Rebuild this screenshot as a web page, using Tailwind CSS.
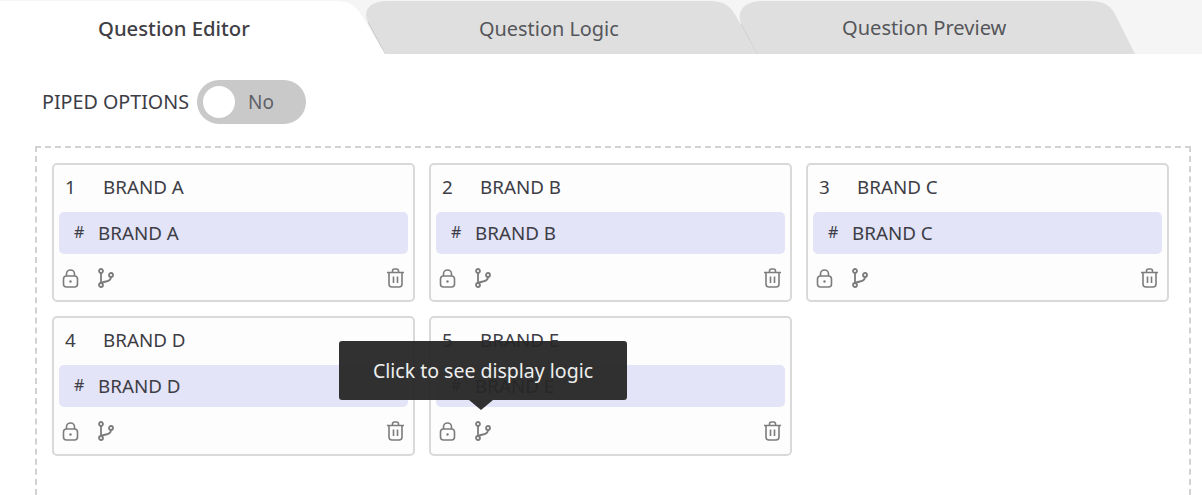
<!DOCTYPE html>
<html lang="en">
<head>
  <meta charset="UTF-8" />
  <title>Question Editor</title>
  <script src="https://cdn.jsdelivr.net/npm/@tailwindcss/browser@4"></script>
</head>
<body class="bg-white h-[495px] overflow-hidden font-['Noto_Sans',sans-serif] text-[#3d3d46]">

  <!-- tabs -->
  <div class="flex h-[54px] bg-[#f5f5f5] overflow-hidden">
    <div class="relative z-20 w-[385px] h-[54px] flex items-center pl-[98px] pt-[3px]">
      <svg class="absolute inset-0" width="385" height="54" viewBox="0 0 385 54"><path d="M0 54V1H335C350 1 356 6 362 16L385 54Z" fill="#fff"/></svg>
      <span class="relative text-[20.3px] font-medium text-[#3f4045]">Question Editor</span>
    </div>
    <div class="relative z-10 ml-[-21px] w-[393px] h-[54px] flex items-center pl-[115px] pt-[3px]">
      <svg class="absolute inset-0" width="393" height="54" viewBox="0 0 393 54"><path d="M21 54L4 22C-2 10 6 1 24 1H345C360 1 366 6 372 16L393 54Z" fill="#dfdfdf"/><path d="M21 54L4 22" stroke="#c9c9c9" fill="none"/></svg>
      <span class="relative text-[19.9px] text-[#55565a]">Question Logic</span>
    </div>
    <div class="relative ml-[-18px] w-[397px] h-[54px] flex items-center pl-[103px] pt-[3px]">
      <svg class="absolute inset-0" width="397" height="54" viewBox="0 0 397 54"><path d="M18 54L2 24C-3 10 6 1 24 1H350C366 1 372 6 377 16L396 54Z" fill="#dfdfdf"/><path d="M18 54L2 24" stroke="#c9c9c9" fill="none"/></svg>
      <span class="relative text-[20.1px] text-[#55565a]">Question Preview</span>
    </div>
  </div>

  <!-- piped options -->
  <div class="flex items-center h-[44px] mt-[26px] pl-[42px]">
    <span class="w-[155px] text-[19.7px] whitespace-nowrap">PIPED OPTIONS</span>
    <div class="flex items-center w-[109px] h-[44px] rounded-full bg-[#c9c9c9] pl-[6px]">
      <span class="w-[32px] h-[32px] rounded-full bg-white"></span>
      <span class="ml-[13px] text-[19px] text-[#5f6068]">No</span>
    </div>
  </div>

  <!-- options box -->
  <div class="ml-[35px] mt-[22px] w-[1156px] h-[349px] border-2 border-b-0 border-dashed border-[#d2d2d2] p-[15px]">
    <div id="cards" class="grid grid-cols-[363px_363px_363px] gap-[14px]"></div>
  </div>

  <script>
    const brands = ["A", "B", "C", "D", "E"];

    const lock = `<svg class="w-[17px] h-[20px]" viewBox="0 0 17 20" fill="none" stroke="currentColor" stroke-width="1.6"><rect x="1.5" y="8" width="14" height="11" rx="3"/><path d="M4.5 8V6a4 4 0 0 1 8 0v2"/><circle cx="8.5" cy="13.5" r="1.2" fill="currentColor" stroke="none"/></svg>`;
    const branch = `<svg class="ml-[18px] w-[18px] h-[20px]" viewBox="0 0 18 20" fill="none" stroke="currentColor" stroke-width="1.8"><circle cx="4" cy="3" r="2"/><circle cx="4" cy="17" r="2"/><circle cx="14" cy="7" r="2"/><path d="M4 5v10M14 9c0 3-2 4-5 4.500-2.500.4-4 1-5 2"/></svg>`;
    const trash = `<svg class="ml-auto w-[19px] h-[20px]" viewBox="0 0 19 20" fill="none" stroke="currentColor" stroke-width="1.6"><path d="M1 4.500h17M6.500 4.500V3a2 2 0 0 1 2-2h2a2 2 0 0 1 2 2v1.500M3 4.500V16a3 3 0 0 0 3 3h7a3 3 0 0 0 3-3V4.500M7.500 8.500v6.500M11.500 8.500v6.500"/></svg>`;

    const tooltip = `<div class="absolute left-[-92px] top-[23px] w-[288px] h-[59px] flex items-center justify-center rounded-[3px] bg-[#262626]/95 text-[19.5px] text-[#eeeeee] whitespace-nowrap">
      Click to see display logic
      <span class="absolute left-[130px] bottom-[-10px] w-0 h-0 border-x-[12px] border-x-transparent border-t-[10px] border-t-[#262626]/95"></span>
    </div>`;

    document.getElementById("cards").innerHTML = brands.map((b, i) => `
      <div class="relative ${i < 3 ? "h-[139px]" : "h-[140px]"} rounded-[5px] border-2 border-[#d9d9d9] bg-[#fdfdfd] px-[5px]">
        <div class="flex items-center h-[44px] pl-[6px] text-[18.8px]"><span class="w-[38px]">${i + 1}</span><span>BRAND ${b}</span></div>
        <div class="flex items-center h-[42px] mt-[3px] rounded-[5px] bg-[#e4e4f8] pl-[15px] text-[18.8px]"><span class="w-[24px] mt-[-2px] text-[16px]">#</span><span>BRAND ${b}</span></div>
        <div class="flex items-center h-[46px] pt-[2px] pl-[3px] pr-[3px] text-[#7c7c7c]">${lock}${branch}${trash}</div>
        ${i === 4 ? tooltip : ""}
      </div>`).join("");
  </script>
</body>
</html>
